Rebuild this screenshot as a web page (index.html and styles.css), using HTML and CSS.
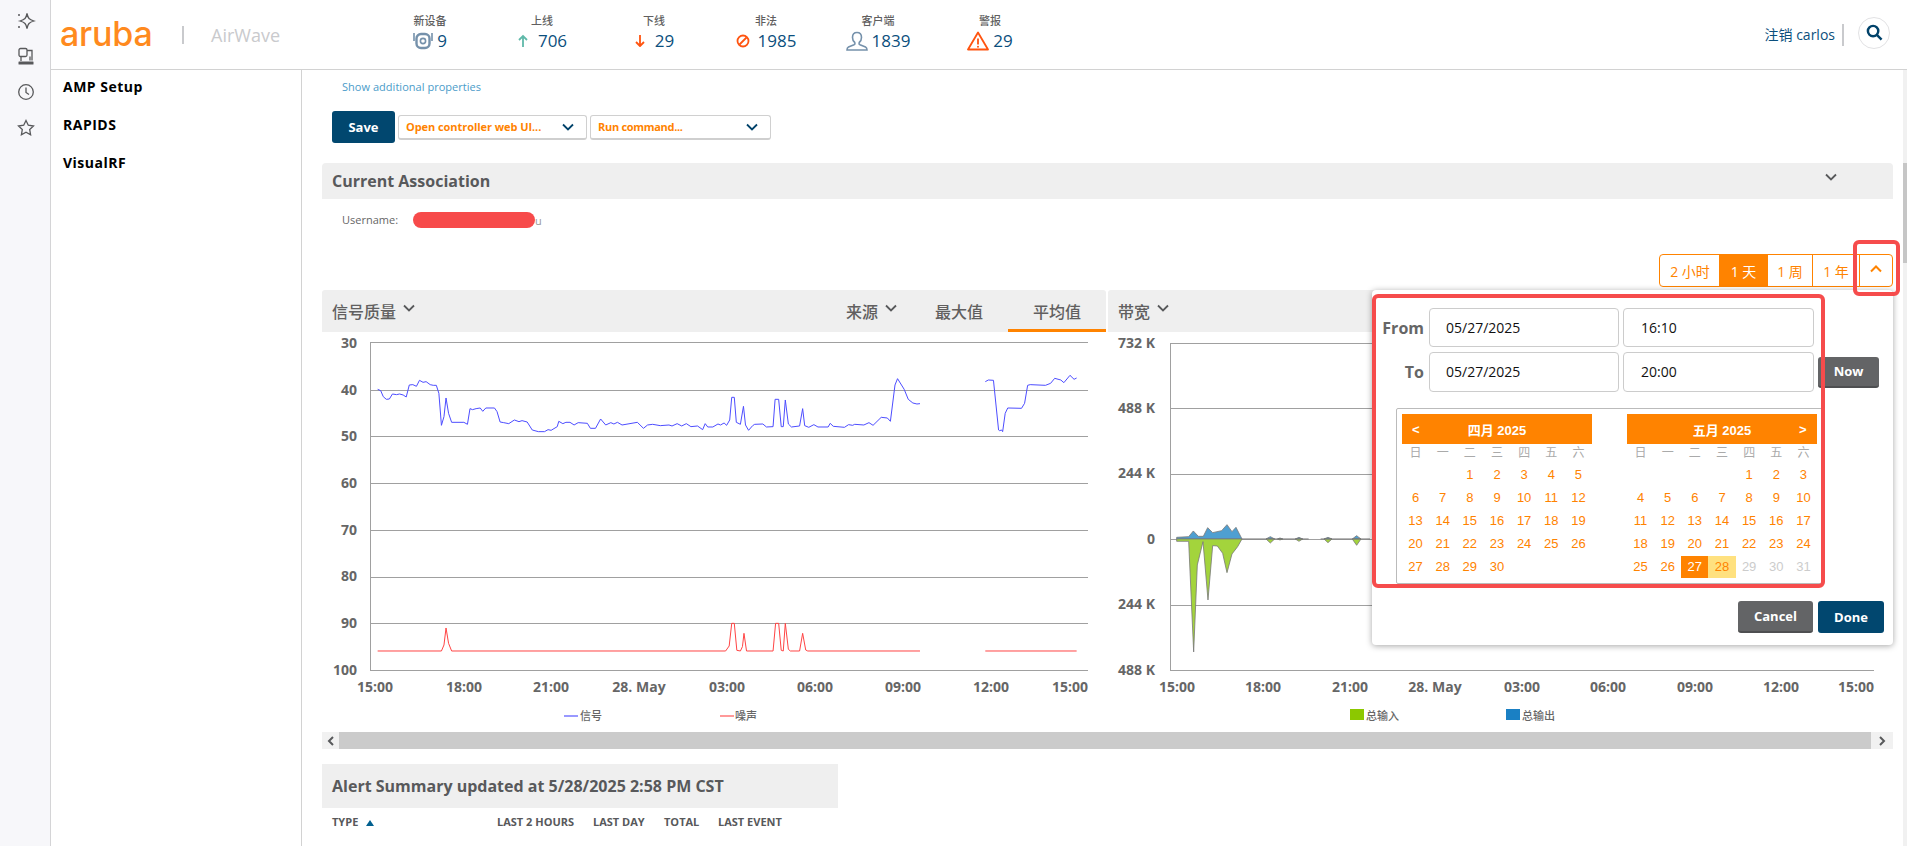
FILE: index.html
```html
<!DOCTYPE html>
<html lang="zh">
<head>
<meta charset="utf-8">
<title>AirWave</title>
<link rel="stylesheet" href="styles.css">
</head>
<body>
<div class="app">
  <nav class="rail">
    <svg class="rail-icon" viewBox="0 0 20 20"><path d="M11 2.500C12 7.500 13 8.500 18 10C13 11.500 12 12.500 11 17.500C10 12.500 9 11.500 4 10C9 8.500 10 7.500 11 2.500Z"/><circle class="solid" cx="3" cy="4" r="1"/><circle class="solid" cx="3" cy="16" r="1"/></svg>
    <svg class="rail-icon" viewBox="0 0 20 20"><rect x="3" y="1.500" width="8" height="8" rx="1.500"/><path d="M11 3.500h5v10M5 9.500v4.500M14 9.500v4"/><rect class="solid" x="2.500" y="14.500" width="15" height="3" rx=".5"/></svg>
    <svg class="rail-icon" viewBox="0 0 20 20"><circle cx="10" cy="10" r="7.300"/><path d="M10 5.500V10.500L13 12.500"/></svg>
    <svg class="rail-icon" viewBox="0 0 20 20"><polygon points="10,2.500 12.300,7.200 17.500,8 13.700,11.600 14.600,16.800 10,14.300 5.400,16.800 6.300,11.600 2.500,8 7.700,7.200"/></svg>
  </nav>
  <div class="shell">
    <header class="topbar">
      <div class="brand">
        <span class="logo">aruba</span>
        <span class="brand-sep"></span>
        <span class="product">AirWave</span>
      </div>
      <div class="stats">
        <div class="stat"><span class="stat-label">新设备</span><span class="stat-value">
          <svg class="ic-20" viewBox="0 0 20 18"><rect class="ic-steel" x="3.500" y="2" width="13" height="14" rx="4.500"/><circle class="ic-steel thin" cx="10" cy="9" r="2.600"/><path class="ic-steel thin" d="M1 1v8M19 1v8"/></svg>9</span></div>
        <div class="stat"><span class="stat-label">上线</span><span class="stat-value wide">
          <svg class="ic-12" viewBox="0 0 12 14"><path class="ic-teal" d="M6 13V2M2 6l4-4 4 4"/></svg>706</span></div>
        <div class="stat"><span class="stat-label">下线</span><span class="stat-value wide">
          <svg class="ic-12" viewBox="0 0 12 14"><path class="ic-red" d="M6 1v11M2 8l4 4 4-4"/></svg>29</span></div>
        <div class="stat"><span class="stat-label">非法</span><span class="stat-value wide">
          <svg class="ic-14" viewBox="0 0 14 14"><circle class="ic-red" cx="7" cy="7" r="5.500"/><path class="ic-red" d="M3.500 10.500l7-7"/></svg>1985</span></div>
        <div class="stat"><span class="stat-label">客户端</span><span class="stat-value">
          <svg class="ic-22" viewBox="0 0 22 20"><path class="ic-steel thin" d="M11 1.500c-3 0-4.500 2.300-4.500 5 0 2.200 1 4 2.300 5 .4.800.1 1.800-.8 2.300L2.500 16c-1 .5-1.500 1.200-1.500 3h20c0-1.800-.5-2.500-1.500-3l-5.500-2.200c-.9-.5-1.200-1.500-.8-2.300 1.300-1 2.300-2.800 2.300-5 0-2.700-1.500-5-4.500-5z"/></svg>1839</span></div>
        <div class="stat"><span class="stat-label">警报</span><span class="stat-value">
          <svg class="ic-22" viewBox="0 0 22 20"><path class="ic-red" d="M11 1.500L1 18.500h20zM11 7.500v6"/><circle class="ic-dot" cx="11" cy="15.800" r="1"/></svg>29</span></div>
      </div>
      <div class="account">
        <span class="logout">注销 carlos</span>
        <span class="account-sep"></span>
        <span class="search"><svg viewBox="0 0 18 18"><circle cx="7.500" cy="7.500" r="5.500"/><path d="M11.500 11.500L16.500 16.500"/></svg></span>
      </div>
    </header>
    <div class="body">
      <aside class="sidebar">
        <a class="side-item">AMP Setup</a>
        <a class="side-item">RAPIDS</a>
        <a class="side-item">VisualRF</a>
      </aside>
      <main class="content">
        <div class="inner">
          <div class="props-link">Show additional properties</div>
          <div class="toolbar">
            <button class="btn-save">Save</button>
            <div class="select sel-a"><span>Open controller web UI...</span><svg class="chev" viewBox="0 0 12 8"><path d="M1 1.500l5 5 5-5"/></svg></div>
            <div class="select sel-b"><span>Run command...</span><svg class="chev" viewBox="0 0 12 8"><path d="M1 1.500l5 5 5-5"/></svg></div>
          </div>
          <section class="section-head"><h2>Current Association</h2><svg class="chev-grey" viewBox="0 0 12 8"><path d="M1 1.500l5 5 5-5"/></svg></section>
          <div class="user-row"><span class="user-label">Username:</span><span class="redact"></span><span class="redact-tail">u</span></div>
          <div class="range-row">
            <div class="range">
              <span class="seg s1">2 小时</span>
              <span class="seg s2 on">1 天</span>
              <span class="seg s3">1 周</span>
              <span class="seg s4">1 年</span>
              <span class="seg s5"><svg viewBox="0 0 12 8"><path d="M1 6.500l5-5 5 5"/></svg></span>
              <span class="anno-btn"></span>
            </div>
          </div>
          <div class="charts">
            <div class="panel">
              <div class="panel-head">
                <span class="panel-title">信号质量</span><svg class="chev-title" viewBox="0 0 12 8"><path d="M1 1.500l5 5 5-5"/></svg>
                <div class="tabs">
                  <span class="tab-source">来源<svg class="chev-title" viewBox="0 0 12 8"><path d="M1 1.500l5 5 5-5"/></svg></span>
                  <span class="tab">最大值</span>
                  <span class="tab active">平均值</span>
                </div>
              </div>
              <svg class="plot" viewBox="322 332 784 400">
                <g class="grid">
                  <path d="M370.500 342V670M370 342.500H1088M370 390.500H1088M370 436.500H1088M370 483.500H1088M370 530.500H1088M370 577.500H1088M370 623.500H1088M370 670.500H1088"/>
                </g>
                <g class="ax ax-y">
                  <text x="357" y="348">30</text><text x="357" y="395">40</text><text x="357" y="441">50</text><text x="357" y="488">60</text><text x="357" y="535">70</text><text x="357" y="581">80</text><text x="357" y="628">90</text><text x="357" y="675">100</text>
                </g>
                <g class="ax ax-x">
                  <text x="375" y="692">15:00</text><text x="464" y="692">18:00</text><text x="551" y="692">21:00</text><text x="639" y="692">28. May</text><text x="727" y="692">03:00</text><text x="815" y="692">06:00</text><text x="903" y="692">09:00</text><text x="991" y="692">12:00</text><text x="1070" y="692">15:00</text>
                </g>
                <g transform="translate(320 280) scale(.5102 .3333)">
                  <polyline class="sig" points="113,328 119,332 124,350 130,358 136,357 142,342 150,344 156,342 163,345 169,351 175,315 182,314 189,319 195,301 202,307 208,305 216,314 222,316 228,316 233,340 238,436 243,410 247,354 252,400 258,427 282,427 289,433 294,386 299,389 306,386 314,384 319,394 325,384 342,384 347,395 353,426 360,428 370,431 381,420 390,425 396,422 406,426 416,450 428,455 440,455 447,449 453,451 465,440 468,424 476,431 482,427 490,427 498,435 506,428 524,430 530,445 540,445 550,417 560,435 570,428 576,432 583,427 592,435 622,427 634,445 642,435 652,433 667,437 684,435 690,438 700,431 709,438 718,431 727,440 740,438 750,449 755,431 760,441 770,441 780,432 785,435 792,429 797,436 803,420 807,352 812,352 816,427 824,433 830,379 834,435 840,451 848,437 852,433 868,432 875,441 888,440 892,358 899,358 904,440 908,440 912,360 918,432 924,441 940,438 946,386 950,437 958,442 968,434 976,441 996,441 1000,430 1006,439 1028,442 1036,434 1044,436 1048,433 1066,435 1076,428 1084,436 1100,412 1112,414 1118,424 1127,315 1132,296 1145,328 1153,358 1162,369 1170,372 1176,371"/>
                  <polyline class="sig" points="1304,305 1310,300 1320,301 1330,450 1332,452 1336,450 1338,455 1343,400 1348,384 1375,385 1381,370 1387,316 1392,314 1422,316 1432,310 1440,295 1452,300 1458,308 1470,286 1478,298 1483,294"/>
                </g>
                <g transform="translate(320 580) scale(.5102 .3333)">
                  <polyline class="noise" points="113,213 238,213 243,195 247,144 252,190 258,213 795,213 802,198 807,130 812,130 817,211 824,213 828,200 831,160 836,213 888,213 893,130 899,130 904,211 908,213 912,130 918,208 922,213 940,213 946,160 952,210 956,213 1176,213"/>
                  <polyline class="noise" points="1304,213 1483,213"/>
                </g>
                <g class="legend">
                  <rect class="swatch-sig" x="564" y="715" width="14" height="2"/><text x="580" y="720">信号</text>
                  <rect class="swatch-noise" x="720" y="715" width="14" height="2"/><text x="735" y="720">噪声</text>
                </g>
              </svg>
            </div>
            <div class="panel">
              <div class="panel-head">
                <span class="panel-title">带宽</span><svg class="chev-title" viewBox="0 0 12 8"><path d="M1 1.500l5 5 5-5"/></svg>
              </div>
              <svg class="plot" viewBox="1108 332 785 400">
                <g class="grid">
                  <path d="M1170.500 343V670M1170 343.500H1874M1170 408.500H1874M1170 474.500H1874M1170 539.500H1874M1170 605.500H1874M1170 670.500H1874"/>
                </g>
                <g class="ax ax-y">
                  <text x="1155" y="348">732 K</text><text x="1155" y="413">488 K</text><text x="1155" y="478">244 K</text><text x="1155" y="544">0</text><text x="1155" y="609">244 K</text><text x="1155" y="675">488 K</text>
                </g>
                <g class="ax ax-x">
                  <text x="1177" y="692">15:00</text><text x="1263" y="692">18:00</text><text x="1350" y="692">21:00</text><text x="1435" y="692">28. May</text><text x="1522" y="692">03:00</text><text x="1608" y="692">06:00</text><text x="1695" y="692">09:00</text><text x="1781" y="692">12:00</text><text x="1856" y="692">15:00</text>
                </g>
                <g transform="translate(1110 330) scale(.3333)">
                  <path class="area-out" d="M200 627V622L236 620L250 603L265 619L280 619L293 593L308 608L335 602L351 584L366 605L378 592L396 627ZM468 627L481 620L494 627ZM503 627L510 624L518 627ZM556 627L567 622L578 627ZM642 627L654 622L666 627ZM727 627L740 617L753 627Z"/>
                  <path class="area-in" d="M200 627V634L236 634L251 966L262 705L279 635L294 810L308 647L322 648L338 670L351 728L366 672L383 650L396 627ZM468 627L481 639L494 627ZM503 627L510 630L518 627ZM556 627L567 634L578 627ZM642 627L654 638L666 627ZM727 627L740 646L753 627Z"/>
                  <path class="base" d="M396 627H596M632 627H780"/>
                </g>
                <g class="legend">
                  <rect class="swatch-in" x="1350" y="709" width="14" height="11"/><text x="1366" y="720">总输入</text>
                  <rect class="swatch-out" x="1506" y="709" width="14" height="11"/><text x="1522" y="720">总输出</text>
                </g>
              </svg>
            </div>
          </div>
          <div class="hscroll">
            <span class="hs-btn"><svg viewBox="0 0 8 10"><path d="M6 1L2 5l4 4"/></svg></span>
            <span class="hs-thumb"></span>
            <span class="hs-btn wide"><svg viewBox="0 0 8 10"><path d="M2 1l4 4-4 4"/></svg></span>
          </div>
          <div class="alert-head">Alert Summary updated at 5/28/2025 2:58 PM CST</div>
          <div class="alert-cols">
            <span class="c-type">TYPE <i class="sort"></i></span>
            <span class="c-2h">LAST 2 HOURS</span>
            <span class="c-day">LAST DAY</span>
            <span class="c-total">TOTAL</span>
            <span>LAST EVENT</span>
          </div>

          <div class="popup">
            <div class="row-from">
              <label class="dt-label">From</label>
              <div class="dt-input">05/27/2025</div>
              <div class="dt-input time">16:10</div>
            </div>
            <div class="row-to">
              <label class="dt-label">To</label>
              <div class="dt-input">05/27/2025</div>
              <div class="dt-input time">20:00</div>
              <button class="btn-now">Now</button>
            </div>
            <div class="calendar">
              <div class="month">
                <div class="month-head"><span class="nav">&lt;</span><span>四月 2025</span><span class="nav"></span></div>
                <div class="dow"><span>日</span><span>一</span><span>二</span><span>三</span><span>四</span><span>五</span><span>六</span></div>
                <div class="days">
                  <span></span><span></span><span>1</span><span>2</span><span>3</span><span>4</span><span>5</span>
                  <span>6</span><span>7</span><span>8</span><span>9</span><span>10</span><span>11</span><span>12</span>
                  <span>13</span><span>14</span><span>15</span><span>16</span><span>17</span><span>18</span><span>19</span>
                  <span>20</span><span>21</span><span>22</span><span>23</span><span>24</span><span>25</span><span>26</span>
                  <span>27</span><span>28</span><span>29</span><span>30</span>
                </div>
              </div>
              <div class="month">
                <div class="month-head"><span class="nav"></span><span>五月 2025</span><span class="nav">&gt;</span></div>
                <div class="dow"><span>日</span><span>一</span><span>二</span><span>三</span><span>四</span><span>五</span><span>六</span></div>
                <div class="days">
                  <span></span><span></span><span></span><span></span><span>1</span><span>2</span><span>3</span>
                  <span>4</span><span>5</span><span>6</span><span>7</span><span>8</span><span>9</span><span>10</span>
                  <span>11</span><span>12</span><span>13</span><span>14</span><span>15</span><span>16</span><span>17</span>
                  <span>18</span><span>19</span><span>20</span><span>21</span><span>22</span><span>23</span><span>24</span>
                  <span>25</span><span>26</span><span class="sel">27</span><span class="today">28</span><span class="off">29</span><span class="off">30</span><span class="off">31</span>
                </div>
              </div>
            </div>
            <div class="popup-foot">
              <button class="btn-cancel">Cancel</button>
              <button class="btn-done">Done</button>
            </div>
            <span class="anno-popup"></span>
          </div>
        </div>
        <div class="vscroll"><span class="vs-thumb"></span></div>
      </main>
    </div>
  </div>
</div>
</body>
</html>
```

FILE: styles.css
```css
* { box-sizing: border-box; }
html, body { margin: 0; height: 846px; overflow: hidden; background: #fff; }
body { font-family: "Open Sans", "Noto Sans CJK SC", sans-serif; color: #58595b; }
button { font-family: inherit; border: 0; cursor: pointer; }

.app { display: flex; width: 1907px; height: 846px; }

/* left rail */
.rail { width: 51px; flex: none; background: #f7f7fa; border-right: 1px solid #d4d4d6; padding: 11px 0 0 1px; display: flex; flex-direction: column; align-items: center; gap: 15.5px; }
.rail-icon { width: 20px; height: 20px; fill: none; stroke: #58595b; stroke-width: 1.3; }
.rail-icon .solid { fill: #58595b; stroke: none; }

.shell { flex: 1; min-width: 0; display: flex; flex-direction: column; }

/* top bar */
.topbar { height: 70px; flex: none; display: flex; align-items: center; border-bottom: 1px solid #d2d2d2; }
.brand { width: 323px; flex: none; display: flex; align-items: center; padding-left: 9px; }
.logo { font-family: Inter, sans-serif; font-weight: 500; font-size: 34px; letter-spacing: -.2px; line-height: 40px; color: #ff8a1e; width: 122px; margin-top: -1px; }
.brand-sep { width: 2px; height: 18px; background: #c9cacd; }
.product { margin-left: 27px; font-size: 18px; color: #c9cacd; }

.stats { display: flex; margin-top: -6px; }
.stat { width: 112px; display: flex; flex-direction: column; align-items: center; }
.stat-label { font-size: 11px; line-height: 14px; font-weight: 500; color: #615f5f; font-family: "Noto Sans CJK SC", sans-serif; }
.stat-value { display: flex; align-items: center; gap: 4px; margin-top: 4px; font-size: 17px; line-height: 20px; color: #0b4f7d; }
.stat-value.wide { gap: 9px; }
.ic-20 { width: 20px; height: 18px; }
.ic-12 { width: 12px; height: 14px; }
.ic-14 { width: 14px; height: 14px; margin-right: -1px; }
.ic-22 { width: 22px; height: 20px; }
.ic-steel { fill: none; stroke: #7591ab; stroke-width: 2.4; }
.ic-steel.thin { stroke-width: 1.6; }
.ic-teal { fill: none; stroke: #5fb9a9; stroke-width: 1.8; }
.ic-red { fill: none; stroke: #ff5410; stroke-width: 1.8; stroke-linejoin: round; }
.ic-dot { fill: #ff5410; }

.account { margin-left: auto; padding-right: 17px; display: flex; align-items: center; }
.logout { font-size: 14px; color: #0b4f7d; margin-top: -2px; }
.account-sep { width: 2px; height: 22px; background: #c9cacd; margin: 0 14px 0 7px; }
.search { width: 32px; height: 32px; border: 1px solid #e2e2e4; border-radius: 50%; display: flex; align-items: center; justify-content: center; margin-top: -4px; }
.search svg { width: 17px; height: 17px; fill: none; stroke: #01426a; stroke-width: 2.6; }

.body { flex: 1; min-height: 0; display: flex; }

/* sidebar */
.sidebar { width: 251px; flex: none; border-right: 1px solid #d2d2d2; padding: 7px 0 0 12px; display: flex; flex-direction: column; gap: 18px; }
.side-item { font-size: 14px; line-height: 20px; font-weight: 700; letter-spacing: .5px; color: #000; }

/* content */
.content { flex: 1; min-width: 0; display: flex; padding-left: 20px; }
.inner { position: relative; width: 1571px; flex: none; }
.vscroll { width: 4px; margin-left: 10px; flex: none; background: #f1f1f1; }
.vs-thumb { display: block; width: 4px; height: 100px; margin-top: 93px; background: #c6c6c6; }

.props-link { margin: 9px 0 0 20px; font-size: 11px; line-height: 16px; letter-spacing: .03px; color: #4b9cc9; }

.toolbar { display: flex; align-items: center; gap: 3px; margin-top: 16px; padding-left: 10px; height: 32px; }
.btn-save { width: 63px; height: 32px; border-radius: 3px; background: #01476f; color: #fff; font-size: 13px; font-weight: 700; }
.select { height: 25px; display: flex; align-items: center; justify-content: space-between; padding: 0 12px 0 7px; background: #fff; border: 1px solid #d0d0d0; border-bottom: 2px solid #cfcfcf; border-radius: 3px; font-size: 11px; font-weight: 700; color: #ff8300; }
.sel-a { width: 189px; letter-spacing: -.06px; }
.sel-b { width: 181px; letter-spacing: -.3px; }
.chev { width: 12px; height: 8px; fill: none; stroke: #01426a; stroke-width: 1.8; }

.section-head { margin-top: 20px; height: 36px; background: #efefef; border-radius: 4px 4px 0 0; display: flex; align-items: center; justify-content: space-between; padding: 0 56px 0 10px; }
.section-head h2 { margin: 0; font-size: 16px; line-height: 24px; font-weight: 700; color: #58595b; }
.chev-grey { width: 12px; height: 8px; fill: none; stroke: #58595b; stroke-width: 1.8; margin-top: -8px; }

.user-row { margin-top: 13px; height: 16px; padding-left: 20px; display: flex; align-items: center; font-size: 11px; color: #666; }
.user-label { margin-top: -1px; }
.redact { width: 122px; height: 16px; margin-left: 15px; border-radius: 8px; background: #f74a4a; }
.redact-tail { color: #999; }

.range-row { margin-top: 26px; display: flex; justify-content: flex-end; }
.range { position: relative; display: flex; height: 33px; border: 1px solid #ff8300; border-radius: 4px; color: #ff8300; font-size: 14px; }
.seg { display: flex; align-items: center; justify-content: center; border-right: 1px solid #ff8300; }
.s1 { width: 60px; padding-left: 1px; }
.s2 { width: 48px; }
.s3 { width: 45px; }
.s4 { width: 47px; }
.s5 { width: 32px; border-right: 0; }
.s5 svg { width: 12px; height: 8px; fill: none; stroke: #ff8300; stroke-width: 2; margin-top: -4px; }
.seg.on { background: #ff8300; color: #fff; }
.anno-btn { position: absolute; z-index: 5; right: -8px; top: -15px; width: 47px; height: 56px; border: 4px solid #f64c4c; border-radius: 6px; }

.charts { margin-top: 3px; display: flex; gap: 2px; height: 442px; }
.panel { width: 784px; flex: none; }
.panel + .panel { width: 785px; }
.panel-head { height: 42px; background: #efefef; border-radius: 3px 3px 0 0; display: flex; align-items: center; padding-left: 10px; }
.panel-title { font-size: 16px; font-weight: 500; color: #615f5f; font-family: "Noto Sans CJK SC", sans-serif; }
.chev-title { width: 12px; height: 8px; fill: none; stroke: #58595b; stroke-width: 1.8; margin: -6px 0 0 7px; }
.tabs { margin-left: auto; display: flex; align-items: stretch; height: 42px; font-size: 16px; font-weight: 500; color: #615f5f; font-family: "Noto Sans CJK SC", sans-serif; }
.tab-source { display: flex; align-items: center; margin-right: 13px; }
.tab { width: 98px; display: flex; align-items: center; justify-content: center; }
.tab.active { border-bottom: 3px solid #ff8300; padding-top: 3px; }

.plot { display: block; width: 100%; height: 400px; }
.grid path { fill: none; stroke: #a0a0a0; stroke-width: 1; }
.ax text { font-family: "Open Sans", sans-serif; font-weight: 700; font-size: 14px; fill: #666; }
.ax-y text { text-anchor: end; }
.ax-x text { text-anchor: middle; }
.sig, .noise { fill: none; stroke-width: 1; vector-effect: non-scaling-stroke; }
.sig { stroke: #4d4dff; }
.noise { stroke: #ff4444; }
.area-out { fill: #4f9fd1; stroke: #777; stroke-width: .8; vector-effect: non-scaling-stroke; }
.area-in { fill: #a3d43c; stroke: #777; stroke-width: .8; vector-effect: non-scaling-stroke; }
.base { fill: none; stroke: #777; stroke-width: 1; vector-effect: non-scaling-stroke; }
.legend text { font-family: "Noto Sans CJK SC", sans-serif; font-size: 11px; font-weight: 500; fill: #666; }
.swatch-sig { fill: #9999ff; }
.swatch-noise { fill: #ff9999; }
.swatch-in { fill: #8cc800; }
.swatch-out { fill: #1a80c4; }

.hscroll { display: flex; height: 17px; }
.hs-btn { width: 17px; flex: none; background: #f1f1f1; display: flex; align-items: center; justify-content: center; }
.hs-btn.wide { width: 22px; }
.hs-btn svg { width: 8px; height: 10px; fill: none; stroke: #58595b; stroke-width: 2; }
.hs-thumb { flex: 1; background: #cbcbcb; }

.alert-head { margin-top: 15px; width: 516px; height: 44px; background: #efefef; padding-left: 10px; font-size: 16px; line-height: 44px; font-weight: 700; color: #58595b; white-space: nowrap; }
.alert-cols { margin-top: 6px; padding-left: 10px; display: flex; font-size: 11px; line-height: 16px; font-weight: 700; color: #58595b; }
.c-type { width: 165px; }
.c-2h { width: 96px; }
.c-day { width: 71px; }
.c-total { width: 54px; }
.sort { display: inline-block; margin-left: 5px; width: 0; height: 0; border-left: 4.5px solid transparent; border-right: 4.5px solid transparent; border-bottom: 6px solid #01608f; }

/* date popup */
.popup { position: absolute; z-index: 3; right: 0; top: 220px; width: 521px; height: 355px; background: #fff; border-radius: 4px; box-shadow: 0 1px 6px rgba(0,0,0,.35); padding-top: 18px; }
.row-from, .row-to { display: flex; align-items: center; gap: 4px; }
.row-to { margin-top: 5px; }
.dt-label { width: 52px; margin-right: 1px; text-align: right; font-size: 16px; font-weight: 700; color: #666; }
.dt-input { width: 190px; height: 39px; border: 1px solid #ccc; border-radius: 4px; padding-left: 16px; font-size: 14px; line-height: 37px; color: #111; }
.dt-input.time { width: 191px; padding-left: 17px; }
.row-to .dt-input { height: 40px; line-height: 38px; }
.btn-now { width: 61px; height: 31px; border-radius: 3px; background: #636466; border-bottom: 2px solid #4e4f51; color: #fff; font-size: 13px; font-weight: 700; }

.calendar { margin: 16px 0 0 24px; width: 427px; height: 176px; border: 1px solid #bbb; border-radius: 2px; padding: 5px; display: flex; gap: 35px; font-family: "Liberation Sans", "Noto Sans CJK SC", sans-serif; }
.month { width: 190px; flex: none; }
.month-head { height: 30px; background: #ff8300; color: #fff; font-size: 13px; font-weight: 700; display: flex; align-items: center; justify-content: space-between; padding: 0 10px; }
.month-head .nav { width: 8px; }
.dow, .days { display: grid; grid-template-columns: repeat(7, 1fr); text-align: center; }
.dow { height: 19px; line-height: 19px; font-size: 12px; color: #aaa; }
.days { grid-auto-rows: 23px; line-height: 23px; font-size: 13px; color: #ff8300; }
.days .sel { background: #ff8300; color: #fff; height: 22px; margin-top: 1px; line-height: 22px; }
.days .today { background: #ffe17f; height: 22px; margin-top: 1px; line-height: 22px; }
.days .off { color: #ccc; }

.popup-foot { margin-top: 17px; padding-right: 9px; display: flex; justify-content: flex-end; gap: 5px; }
.btn-cancel, .btn-done { height: 32px; border-radius: 3px; color: #fff; font-size: 13px; font-weight: 700; }
.btn-cancel { width: 75px; background: #636466; border-bottom: 2px solid #4e4f51; }
.btn-done { width: 66px; background: #01476f; }

.anno-popup { position: absolute; left: 0; top: 4px; width: 453px; height: 294px; border: 4px solid #f64c4c; border-radius: 6px; pointer-events: none; }
```
